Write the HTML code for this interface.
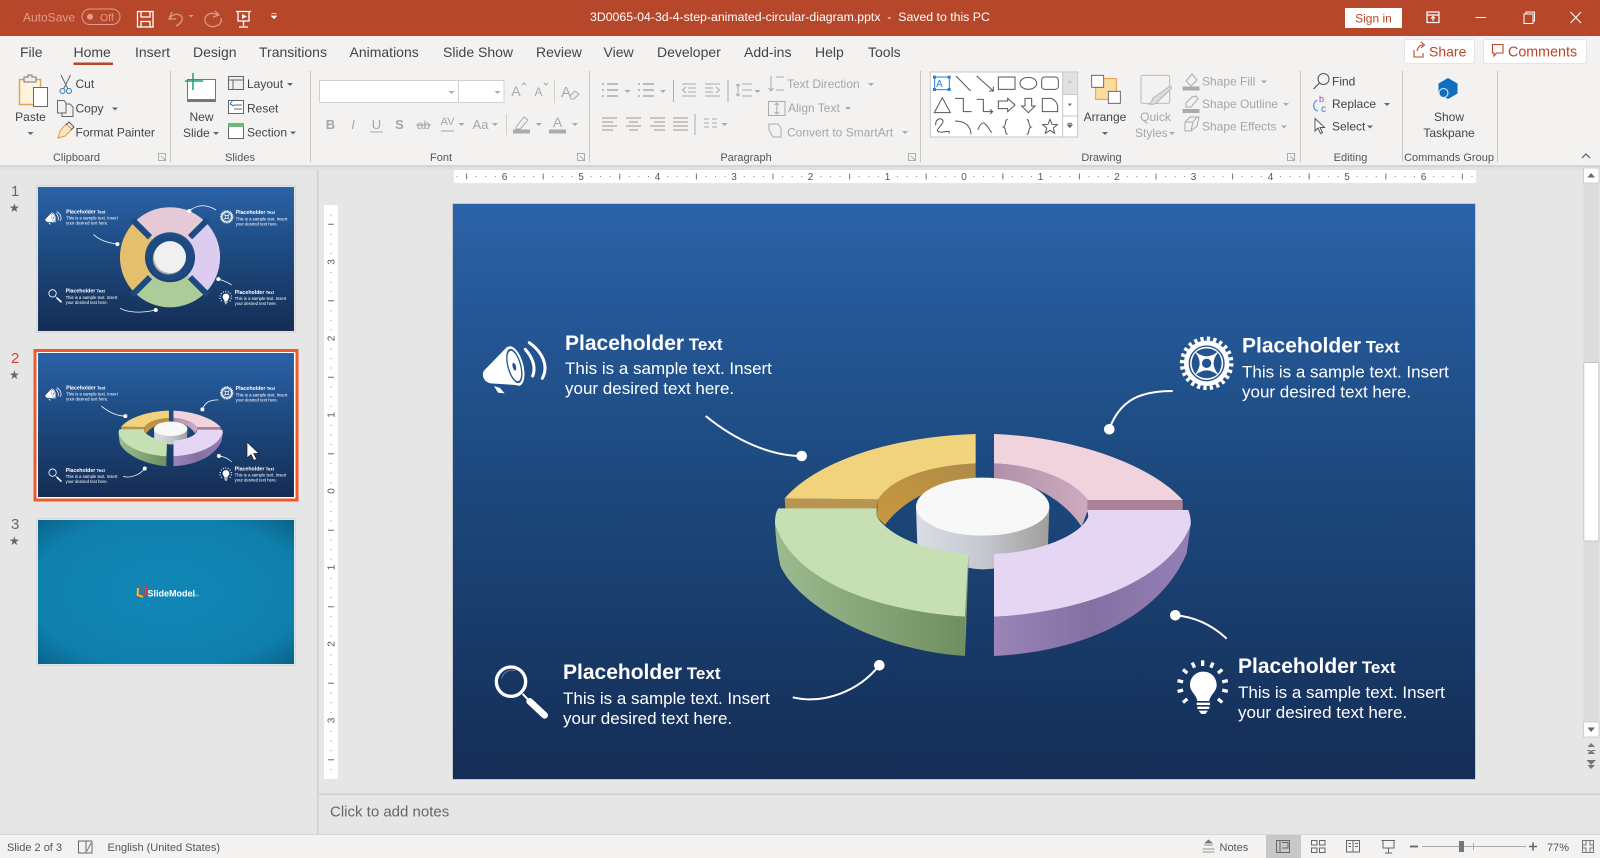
<!DOCTYPE html>
<html lang="en"><head><meta charset="utf-8"><title>3D0065-04-3d-4-step-animated-circular-diagram.pptx</title>
<style>
html,body{margin:0;padding:0;width:1600px;height:858px;overflow:hidden;background:#e6e6e6}
svg{display:block}
body>svg{filter:blur(.35px)}
text{font-family:"Liberation Sans",sans-serif}
.t{font-size:14px;fill:#444}
.r{font-size:12px;fill:#444}
.d{font-size:12px;fill:#a6a6a6}
.g{font-size:11px;fill:#555}
.m{text-anchor:middle}
.h{font-weight:bold;font-size:21px}
.h2{font-weight:bold;font-size:17px}
.st{font-size:17px;fill:#fff}
.ic{fill:none;stroke:#666;stroke-width:1}
.ig{fill:none;stroke:#aaa;stroke-width:1.2}
.car{fill:#666}
.card{fill:#aaa}
.rn{font-size:10px;fill:#555;text-anchor:middle}
.s{font-size:11px;fill:#555}
</style></head>
<body>
<svg width="1600" height="858" viewBox="0 0 1600 858" xmlns="http://www.w3.org/2000/svg">
<defs>
<linearGradient id="bg" x1="0" y1="0" x2="0" y2="1"><stop offset="0" stop-color="#2b62a8"/><stop offset=".45" stop-color="#1d4a80"/><stop offset="1" stop-color="#142d55"/></linearGradient>
<radialGradient id="teal" cx=".5" cy=".5" r=".75"><stop offset="0" stop-color="#1186b6"/><stop offset=".7" stop-color="#0f80ae"/><stop offset="1" stop-color="#0a5c80"/></radialGradient>
<linearGradient id="cyl" x1="0" y1="0" x2="1" y2="0"><stop offset="0" stop-color="#dadde6"/><stop offset=".5" stop-color="#c5c8d0"/><stop offset="1" stop-color="#a09e9a"/></linearGradient>
<linearGradient id="yw" x1="0" y1="1" x2="1" y2="0"><stop offset="0" stop-color="#cc973d"/><stop offset="1" stop-color="#ad8c48"/></linearGradient>
<linearGradient id="pw" x1="0" y1="0" x2="1" y2="0"><stop offset="0" stop-color="#b08fa8"/><stop offset="1" stop-color="#ceabc0"/></linearGradient>
<linearGradient id="gs" x1="0" y1="0" x2="1" y2="0"><stop offset="0" stop-color="#9cbb90"/><stop offset="1" stop-color="#6f8f60"/></linearGradient>
<linearGradient id="vs" x1="0" y1="0" x2="1" y2="0"><stop offset="0" stop-color="#9a84b8"/><stop offset=".5" stop-color="#8570a2"/><stop offset="1" stop-color="#9580b6"/></linearGradient>
<g id="donut">
<path d="M385 238C430 165 560 132 677 130L677 180C560 185 450 250 405 315L380 290Z" fill="url(#yw)"/>
<path d="M104 235L385 238L380 268L106 268Z" fill="#b8964f"/>
<path d="M104 235C200 125 420 50 677 42L677 130C560 135 430 165 385 238Z" fill="#f2d37d"/>
<path d="M732 130C860 135 970 180 1013 240L1013 272L995 320C950 250 850 180 732 176Z" fill="url(#pw)"/>
<path d="M1013 240L1298 240L1298 272L1013 272Z" fill="#a98295"/>
<path d="M732 42C960 50 1200 130 1298 240L1013 240C970 180 860 135 732 130Z" fill="#f0d3dc"/>
<path d="M498 260L502 375C560 400 620 448 698 448C780 448 850 400 894 375L898 260Z" fill="url(#cyl)"/>
<ellipse cx="698" cy="260" rx="200" ry="87" fill="#f8f8f8"/>
<path d="M75 310C78 370 85 410 92 440C150 560 380 690 645 708L645 590C400 575 150 490 75 310Z" fill="url(#gs)"/>
<path d="M655 402L645 590L645 708L655 448Z" fill="#7f9a68"/>
<path d="M85 265L380 265L380 290C420 350 530 395 655 402L645 590C400 575 130 490 75 310C75 290 78 275 85 265Z" fill="#c6e0b4"/>
<path d="M1322 315L1310 400C1230 590 1000 695 732 708L732 590C1000 578 1260 480 1322 315Z" fill="url(#vs)"/>
<path d="M1012 270L1315 270C1322 290 1323 305 1322 315C1260 480 1000 578 732 590L732 402C860 398 990 350 1015 290Z" fill="#e5d6f4"/>
</g>
<g id="ic1" transform="translate(470,320) scale(.3333)">
<path d="M42 152L112 80L152 196L62 190C40 185 34 165 42 152Z" fill="#fff"/>
<ellipse cx="133" cy="138" rx="27" ry="61" transform="rotate(-15 133 138)" fill="#fff"/>
<ellipse cx="133" cy="138" rx="21" ry="53" transform="rotate(-15 133 138)" fill="#24548f"/>
<ellipse cx="133" cy="138" rx="17" ry="47" transform="rotate(-15 133 138)" fill="#fff"/>
<ellipse cx="133" cy="140" rx="5" ry="12" transform="rotate(-15 133 140)" fill="#24548f"/>
<path d="M166 88C190 115 198 145 188 168M178 68C220 98 236 140 217 175" fill="none" stroke="#fff" stroke-width="9" stroke-linecap="round"/>
<path d="M72 198L90 204L104 220L84 218Z" fill="#fff"/>
</g>
<g id="ic2" transform="translate(1100,320) scale(.3333)">
<circle cx="320" cy="130" r="72" fill="none" stroke="#fff" stroke-width="17" stroke-dasharray="9.4 9.45"/>
<circle cx="320" cy="130" r="61" fill="none" stroke="#fff" stroke-width="14"/>
<circle cx="320" cy="130" r="50" fill="#fff"/>
<circle cx="320" cy="130" r="51.500" fill="none" stroke="#24548f" stroke-width="2.500"/>
<g fill="#24548f"><path d="M288 96Q320 74 352 96Q320 122 288 96Z"/><path d="M288 96Q320 74 352 96Q320 122 288 96Z" transform="rotate(90 320 130)"/><path d="M288 96Q320 74 352 96Q320 122 288 96Z" transform="rotate(180 320 130)"/><path d="M288 96Q320 74 352 96Q320 122 288 96Z" transform="rotate(270 320 130)"/><circle cx="320" cy="130" r="14"/></g>
</g>
<g id="ic3" transform="translate(480,640) scale(.3333)">
<circle cx="93" cy="125" r="44" fill="none" stroke="#fff" stroke-width="10"/>
<path d="M128 162L145 180" stroke="#fff" stroke-width="6"/>
<path d="M149 184L194 226" stroke="#fff" stroke-width="20" stroke-linecap="round"/>
<path d="M65 115A32 32 0 0 1 105 92" fill="none" stroke="#fff" stroke-opacity=".5" stroke-width="2"/>
</g>
<g id="ic4" transform="translate(1160,600) scale(.3333)">
<path d="M130 215C155 215 170 235 170 255C170 275 150 285 148 303L112 303C110 285 90 275 90 255C90 235 105 215 130 215Z" fill="#fff"/>
<path d="M110 308H150V315H110ZM112 320H148V327H112ZM116 332H144L136 342H124Z" fill="#fff"/>
<g fill="#fff"><rect x="123" y="181" width="10" height="17"/><rect x="123" y="181" width="10" height="17" transform="rotate(24 128 258)"/><rect x="123" y="181" width="10" height="17" transform="rotate(-24 128 258)"/><rect x="123" y="181" width="10" height="17" transform="rotate(50 128 258)"/><rect x="123" y="181" width="10" height="17" transform="rotate(-50 128 258)"/><rect x="123" y="181" width="10" height="17" transform="rotate(78 128 258)"/><rect x="123" y="181" width="10" height="17" transform="rotate(-78 128 258)"/><rect x="123" y="181" width="10" height="17" transform="rotate(102 128 258)"/><rect x="123" y="181" width="10" height="17" transform="rotate(-102 128 258)"/><rect x="123" y="181" width="10" height="17" transform="rotate(130 128 258)"/><rect x="123" y="181" width="10" height="17" transform="rotate(-130 128 258)"/></g>
</g>
<path id="caret" d="M-3 0H3L0 3Z"/>
</defs>

<rect width="1600" height="858" fill="#e6e6e6"/>
<!-- title bar -->
<rect width="1600" height="36" fill="#b7472a"/>
<text x="23" y="21.5" font-size="12" fill="#df9f8b">AutoSave</text>
<rect x="82" y="9" width="38" height="15.5" rx="7.7" fill="none" stroke="#df9f8b"/>
<circle cx="90" cy="16.7" r="3" fill="#df9f8b"/><text x="100" y="21" font-size="10.5" fill="#df9f8b">Off</text>
<g fill="none" stroke="#fff" stroke-width="1.3"><rect x="137.5" y="11.5" width="15.5" height="15.5"/><path d="M141 11.5V17H150V11.5M141 27V21.5H150V27"/></g>
<g fill="none" stroke="#d89a84" stroke-width="1.3"><path d="M172 12L169 19L176 19M170 18C175 11 184 15 182 20C181 23 178 25 176 26"/><path d="M215 11L219 15L213 17M218 15C211 11 204 15 205 21C206 25 211 28 216 26C220 25 222 22 221 18"/></g>
<path class="car" transform="translate(191,15)" d="M-2.5 0H2.5L0 2.5Z" style="fill:#d89a84"/>
<g fill="none" stroke="#fff" stroke-width="1.3"><path d="M236 11.5H251M238 11.5V21H249V11.5M243.500 21V26M239 27H248"/></g><path d="M242 14L247 16.500L242 19Z" fill="#fff"/>
<path d="M271.500 13.500H276.500M271.500 16H276.500L274 18.500Z" stroke="#fff" fill="#fff" stroke-width=".8"/>
<text x="590" y="21" font-size="12.300" fill="#fff">3D0065-04-3d-4-step-animated-circular-diagram.pptx&#160; -&#160; Saved to this PC</text>
<rect x="1345" y="8" width="57" height="20" fill="#fff"/><text x="1373.500" y="22.500" font-size="12" fill="#b7472a" text-anchor="middle">Sign in</text>
<g fill="none" stroke="#fff" stroke-width="1.2"><rect x="1427" y="12" width="12" height="10.500"/><path d="M1427 15H1439M1433 21V17M1431 18.500L1433 16.500L1435 18.500"/></g>
<path d="M1475.500 17.500H1486" stroke="#fff" stroke-width="1"/>
<g fill="none" stroke="#fff" stroke-width="1"><rect x="1524" y="14" width="9" height="9.500"/><path d="M1526 14V12H1534.500V21H1533"/></g>
<path d="M1570.500 12L1581 23M1581 12L1570.500 23" stroke="#fff" stroke-width="1"/>

<!-- ribbon -->
<rect y="36" width="1600" height="129" fill="#f3f2f1"/>
<rect y="165" width="1600" height="2" fill="#d5d5d5"/>
<rect y="167" width="1600" height="3" fill="#e0e0e0"/>
<g class="t">
<text class="t" x="20" y="57">File</text><text class="t" x="73.500" y="57">Home</text><text class="t" x="135" y="57">Insert</text><text class="t" x="193" y="57">Design</text><text class="t" x="259" y="57">Transitions</text><text class="t" x="349.500" y="57">Animations</text><text class="t" x="443" y="57">Slide Show</text><text class="t" x="536" y="57">Review</text><text class="t" x="603.500" y="57">View</text><text class="t" x="657" y="57">Developer</text><text class="t" x="744" y="57">Add-ins</text><text class="t" x="815" y="57">Help</text><text class="t" x="868" y="57">Tools</text>
</g>
<rect x="73.500" y="62.500" width="39.500" height="2.500" fill="#b7472a"/>
<rect x="1404.500" y="39.500" width="70" height="24" rx="2" fill="#fff" stroke="#e6e4e2"/>
<path d="M1414 50V57H1423V53M1417 51C1418 47 1420 45 1423 45M1421 42L1424.500 45L1421 48" fill="none" stroke="#b7472a" stroke-width="1.100"/>
<text x="1429" y="56.500" font-size="14" fill="#b7472a">Share</text>
<rect x="1483.500" y="39.500" width="103" height="24" rx="2" fill="#fff" stroke="#e6e4e2"/>
<path d="M1492.500 44.500H1503V53H1496.500L1494 56V53H1492.500Z" fill="none" stroke="#b7472a" stroke-width="1.100"/>
<text x="1508" y="56.500" font-size="14.300" fill="#b7472a">Comments</text>

<!-- group separators -->
<g stroke="#c8c6c4"><path d="M170.500 71V162M310.500 71V162M589.500 71V162M920.500 71V162M1300.500 71V162M1402.500 71V162M1497.500 71V162"/></g>
<text class="g m" x="76.500" y="161">Clipboard</text><text class="g m" x="240" y="161">Slides</text><text class="g m" x="441" y="161">Font</text><text class="g m" x="746" y="161">Paragraph</text><text class="g m" x="1101.500" y="161">Drawing</text><text class="g m" x="1350.500" y="161">Editing</text><text class="g m" x="1449" y="161">Commands Group</text>
<g fill="none" stroke="#999" stroke-width=".8"><path d="M158.500 153.500V160.500H165.500V153.500ZM161 156L165 160"/><path d="M577.500 153.500V160.500H584.500V153.500ZM580 156L584 160"/><path d="M908.500 153.500V160.500H915.500V153.500ZM911 156L915 160"/><path d="M1287.500 153.500V160.500H1294.500V153.500ZM1290 156L1294 160"/></g>
<path d="M1582 158L1586 154L1590 158" fill="none" stroke="#555" stroke-width="1.200"/>

<!-- clipboard -->
<rect x="19.500" y="79.500" width="21" height="25" fill="#fdf3df" stroke="#e3a650" stroke-width="1.500"/>
<path d="M24 79.500V77H28V75H32V77H36V82H24Z" fill="#eee" stroke="#777"/>
<rect x="33.500" y="87.500" width="14" height="19" fill="#fff" stroke="#666"/>
<text class="r m" x="30.500" y="121">Paste</text><use href="#caret" x="30.500" y="132" class="car"/>
<path d="M61 75L68 89M70.500 75L63.500 89" stroke="#666" fill="none"/><circle cx="62.500" cy="91" r="2.500" fill="none" stroke="#2a7bbf"/><circle cx="69" cy="91" r="2.500" fill="none" stroke="#2a7bbf"/>
<text class="r" x="75.500" y="88">Cut</text>
<path class="ic" d="M57.500 100.500H64L66 103V113H57.500ZM66 104H70L73 107V116.500H62V113"/>
<text class="r" x="75.500" y="112.500">Copy</text><use href="#caret" x="115" y="107.500" class="car"/>
<path d="M66 124L72 129L65 136L58 138L60 131Z" fill="#f8e6c8" stroke="#e29a3a"/><path d="M66 125L69 122L74 127L71 130" fill="none" stroke="#555"/>
<text class="r" x="75.500" y="136.500">Format Painter</text>

<!-- slides -->
<rect x="187.500" y="79.500" width="28" height="22" fill="#fff" stroke="#777"/><rect x="187" y="99" width="29" height="3" fill="#777"/>
<path d="M193 73V90M185 81H203" stroke="#21a366" stroke-width="1.500"/>
<text class="r m" x="201.500" y="121">New</text><text class="r" x="183" y="137">Slide</text><use href="#caret" x="216" y="132" class="car"/>
<g class="ic"><rect x="228.500" y="76.500" width="15" height="13" fill="#eee"/><path d="M229 80H243M233 80V89"/></g><text class="r" x="247" y="88">Layout</text><use href="#caret" x="290" y="83" class="car"/>
<g class="ic"><rect x="228.500" y="100.500" width="15" height="13" fill="#fff"/><path d="M234 105H242M234 109H242"/></g><path d="M230 104L233 100M230 104L234 106" stroke="#2a7bbf" fill="none"/><text class="r" x="247" y="112.500">Reset</text>
<rect x="228.500" y="123.500" width="15" height="15" fill="#fff" stroke="#666"/><rect x="228" y="123" width="16" height="4" fill="#6fb77f"/><text class="r" x="247" y="136.500">Section</text><use href="#caret" x="293" y="131.500" class="car"/>

<!-- font -->
<rect x="319.500" y="80.500" width="139" height="22" fill="#fff" stroke="#d2d0ce"/><rect x="458.500" y="80.500" width="45.500" height="22" fill="#fff" stroke="#d2d0ce"/>
<use href="#caret" x="451.500" y="91" class="card"/><use href="#caret" x="497.500" y="91" class="card"/>
<text class="m" x="516" y="96" font-size="14" fill="#aaa">A</text><text class="m" x="538.500" y="96" font-size="12" fill="#aaa">A</text>
<path d="M522 85L524 83L526 85M544 83L546 85L548 83" fill="none" stroke="#aaa"/>
<path d="M554.500 80V103" stroke="#d2d0ce"/>
<text x="561" y="97" font-size="15" fill="#aaa">A</text><path d="M570 96L575 91L579 94L574 99H571Z" fill="#eee" stroke="#aaa"/>
<g fill="#a6a6a6"><text class="m" x="330.500" y="129" font-size="13" font-weight="bold" fill="#a6a6a6">B</text><text class="m" x="353" y="129" font-size="13" font-style="italic" fill="#a6a6a6">I</text><text class="m" x="376.500" y="129" font-size="13" fill="#a6a6a6">U</text><text class="m" x="399.500" y="129" font-size="13" font-weight="bold" fill="#a6a6a6">S</text><text class="m" x="423.500" y="129" font-size="12" fill="#a6a6a6">ab</text><text class="m" x="447.500" y="125" font-size="11" fill="#a6a6a6">AV</text><text class="m" x="480.500" y="129" font-size="13" fill="#a6a6a6">Aa</text></g>
<path d="M370 132H383M416 125H431M441 131H454" stroke="#a6a6a6"/>
<use href="#caret" x="461.500" y="123" class="card"/><use href="#caret" x="495" y="123" class="card"/><use href="#caret" x="538.800" y="123" class="card"/><use href="#caret" x="575" y="123" class="card"/>
<path d="M506.500 114V135" stroke="#d2d0ce"/>
<path d="M516 127L524 117L528 120L520 129H516Z" fill="none" stroke="#aaa"/><rect x="513" y="129.500" width="17" height="4" fill="#aaa"/>
<text class="m" x="557.500" y="127" font-size="14" fill="#aaa">A</text><rect x="549" y="129.500" width="17" height="4" fill="#aaa"/>

<!-- paragraph -->
<g stroke="#aaa" fill="none">
<path d="M607 84H618M607 90H618M607 96H618M602 84H604M602 90H604M602 96H604" stroke-width="1.500"/>
<path d="M643 84H654M643 90H654M643 96H654M638 84H640M638 90H640M638 96H640" stroke-width="1.500"/>
<path d="M682 84H696M688 88H696M688 92H696M682 96H696M686 87L682.500 90L686 93" />
<path d="M705 84H720M705 88H713M705 92H713M705 96H720M716 87L719.500 90L716 93"/>
<path d="M742 84H752M742 90H752M742 96H752M738 84V96M736 86L738 84L740 86M736 94L738 96L740 94"/>
<path d="M602 118H617M602 122H613M602 126H617M602 130H613" stroke-width="1.200"/>
<path d="M626 118H641M629 122H638M626 126H641M629 130H638" stroke-width="1.200"/>
<path d="M650 118H665M654 122H665M650 126H665M654 130H665" stroke-width="1.200"/>
<path d="M673 118H688M673 122H688M673 126H688M673 130H688" stroke-width="1.200"/>
<path d="M704 119H709M704 123H709M704 127H709M712 119H717M712 123H717M712 127H717"/>
<path d="M673.500 80V102M728 80V102M695 114V135"/>
<path d="M771 76V90M768.500 88L771 91L773.500 88M776 90H784M776 77H784"/>
<path d="M768.500 101.500H785V115.500H768.500ZM776.800 103V114M774.500 105L776.800 103L779 105M774.500 112L776.800 114L779 112"/>
<path d="M769 124H778L781 128V137H773L769 130Z"/>
</g>
<use href="#caret" x="627.500" y="90" class="card"/><use href="#caret" x="663" y="90" class="card"/><use href="#caret" x="757.600" y="90" class="card"/><use href="#caret" x="724.500" y="123" class="card"/>
<text class="d" x="787" y="88">Text Direction</text><use href="#caret" x="871" y="83" class="card"/>
<text class="d" x="788" y="112">Align Text</text><use href="#caret" x="848" y="107" class="card"/>
<text class="d" x="787" y="136.500" font-size="12.500">Convert to SmartArt</text><use href="#caret" x="905" y="131" class="card"/>

<!-- drawing gallery -->
<g transform="translate(925,66) scale(.33333)" fill="none" stroke="#555" stroke-width="3">
<rect x="16" y="18" width="442" height="195" fill="#fff" stroke="#c8c6c4"/>
<rect x="413" y="19" width="44" height="66" fill="#e1e1e1" stroke="none"/>
<path d="M413 85H458M413 150H458M413 18V213" stroke="#c8c6c4"/>
<path d="M427 50H441L434 44Z" fill="#bbb" stroke="none"/>
<path d="M428 113H441L434.500 120Z" fill="#666" stroke="none"/>
<path d="M428 172H441M428 177H441L434.500 184Z" fill="#666" stroke="#666"/>
<rect x="29" y="33" width="44" height="38" stroke="#2b7cd3"/>
<g fill="#2b7cd3" stroke="none"><rect x="24" y="29" width="9" height="9"/><rect x="68" y="29" width="9" height="9"/><rect x="24" y="66" width="9" height="9"/><rect x="68" y="66" width="9" height="9"/></g>
<path d="M93 30L137 75M155 30L205 75M205 62V75H192"/>
<rect x="220" y="33" width="50" height="37"/><ellipse cx="310" cy="52" rx="25" ry="18"/><rect x="350" y="33" width="50" height="37" rx="9"/>
<path d="M28 140L52 95L76 140ZM90 97H115V137H140M155 100H175V137H203M195 130L203 137L195 144M220 105H248V97L270 117L248 137V128H220ZM300 97H320V120H330L310 140L290 120H300ZM352 97H378C390 100 398 112 398 125V137H352Z"/>
<path d="M32 178C30 150 62 155 52 172C44 185 28 195 45 198C60 200 78 190 72 202M90 165C120 165 137 180 138 205M158 192C175 150 185 180 200 200M248 160C238 160 245 180 235 183C245 186 238 205 248 205M305 160C315 160 308 180 318 183C308 186 315 205 305 205"/>
<path d="M375 160L381 175L397 176L385 186L389 202L375 193L361 202L365 186L353 176L369 175Z"/>
<path d="M512 38H574V100H512Z" fill="#fbdc9f" stroke="#e49a3e" stroke-width="3"/>
<path d="M550 76H586V112H550Z" fill="#fff" stroke-width="2.500"/>
<path d="M500 28H536V64H500Z" fill="#fff" stroke-width="2.500"/>
<rect x="648" y="28" width="86" height="84" rx="5" stroke="#bbb"/>
<path d="M684 96L736 60L740 66L695 110C688 116 680 116 672 114C682 110 680 104 684 96Z" fill="#ddd" stroke="#b5b5b5"/>
</g>
<text class="m" x="939.500" y="87" font-size="10" fill="#2b7cd3">A</text>
<text class="r m" x="1105" y="121">Arrange</text><use href="#caret" x="1105" y="132" class="car"/>
<text class="d m" x="1155.500" y="121">Quick</text><text class="d" x="1135" y="137">Styles</text><use href="#caret" x="1172" y="132" class="card"/>
<g fill="none" stroke="#aaa"><path d="M1186 81L1192 74L1197 80L1191 86Z"/><rect x="1183" y="87" width="16" height="3" fill="#aaa"/><path d="M1186 103L1192 97L1196 96L1198 99L1191 107H1186Z"/><rect x="1183" y="109.500" width="16" height="3" fill="#aaa"/><path d="M1185 122L1190 117H1199L1197 126L1191 131H1185Z"/><path d="M1185 122H1193L1197 117M1193 122L1191 131"/></g>
<text class="d" x="1202" y="85.500">Shape Fill</text><use href="#caret" x="1264" y="80.500" class="card"/>
<text class="d" x="1202" y="108">Shape Outline</text><use href="#caret" x="1286" y="103" class="card"/>
<text class="d" x="1202" y="130.500">Shape Effects</text><use href="#caret" x="1284" y="125.500" class="card"/>

<!-- editing -->
<circle cx="1323.500" cy="79" r="5.500" fill="none" stroke="#555"/><path d="M1319.500 83L1313.500 89" stroke="#555" stroke-width="1.200"/>
<text class="r" x="1332" y="85.500">Find</text>
<text x="1319" y="102" font-size="9" fill="#a347d1">b</text><text x="1321" y="112" font-size="10" fill="#2b7cd3">c</text><path d="M1317 100C1312 104 1313 110 1318 111" fill="none" stroke="#2b7cd3"/>
<text class="r" x="1332" y="108">Replace</text><use href="#caret" x="1387" y="103" class="car"/>
<path d="M1315 118.500V131L1318 128L1320.500 133.500L1322.500 132.500L1320 127.500H1324.500Z" fill="#fff" stroke="#555"/>
<text class="r" x="1332" y="130.500">Select</text><use href="#caret" x="1370" y="125.500" class="car"/>
<path d="M1448 78L1457.500 83.500V93.500L1448 99L1438.500 93.500V83.500Z" fill="#106ebe"/><circle cx="1443.500" cy="93" r="4.500" fill="#106ebe" stroke="#f3f2f1"/>
<text class="r m" x="1449" y="121">Show</text><text class="r m" x="1449" y="137">Taskpane</text>

<!-- left panel / rulers -->
<rect x="317" y="170" width="1.500" height="665" fill="#d0d0d0"/>
<g>
<text x="11" y="196" font-size="15" fill="#666">1</text><text x="9" y="212" font-size="12" fill="#666">★</text>
<text x="11" y="363" font-size="15" fill="#d9432a">2</text><text x="9" y="379" font-size="12" fill="#666">★</text>
<text x="11" y="529" font-size="15" fill="#666">3</text><text x="9" y="545" font-size="12" fill="#666">★</text>
</g>
<!-- h ruler -->
<rect x="454" y="170" width="1022" height="13" fill="#fff"/>
<path d="M456.500 176.500H1476" stroke="#888" stroke-dasharray="1 8.575"/>
<path d="M466.100 176.500H1476" stroke="#777" stroke-width="6" stroke-dasharray="1 75.600"/>
<g>
<rect x="500" y="171" width="9" height="11" fill="#fff"/><rect x="576.500" y="171" width="9" height="11" fill="#fff"/><rect x="653" y="171" width="9" height="11" fill="#fff"/><rect x="729.500" y="171" width="9" height="11" fill="#fff"/><rect x="806" y="171" width="9" height="11" fill="#fff"/><rect x="883" y="171" width="9" height="11" fill="#fff"/><rect x="959.500" y="171" width="9" height="11" fill="#fff"/><rect x="1036" y="171" width="9" height="11" fill="#fff"/><rect x="1112.500" y="171" width="9" height="11" fill="#fff"/><rect x="1189" y="171" width="9" height="11" fill="#fff"/><rect x="1266" y="171" width="9" height="11" fill="#fff"/><rect x="1342.500" y="171" width="9" height="11" fill="#fff"/><rect x="1419" y="171" width="9" height="11" fill="#fff"/>
<text class="rn" x="504.500" y="180">6</text><text class="rn" x="581" y="180">5</text><text class="rn" x="657.500" y="180">4</text><text class="rn" x="734" y="180">3</text><text class="rn" x="810.500" y="180">2</text><text class="rn" x="887.500" y="180">1</text><text class="rn" x="964" y="180">0</text><text class="rn" x="1040.500" y="180">1</text><text class="rn" x="1117" y="180">2</text><text class="rn" x="1193.500" y="180">3</text><text class="rn" x="1270.500" y="180">4</text><text class="rn" x="1347" y="180">5</text><text class="rn" x="1423.500" y="180">6</text>
</g>
<!-- v ruler -->
<rect x="324" y="205" width="14" height="574" fill="#fff"/>
<path d="M331 214.600V778" stroke="#888" stroke-dasharray="1 8.560"/>
<path d="M331 223V778" stroke="#777" stroke-width="6" stroke-dasharray="1 75.500" transform="translate(0,.7)"/>
<g>
<rect x="325" y="257" width="12" height="10" fill="#fff"/><rect x="325" y="333.500" width="12" height="10" fill="#fff"/><rect x="325" y="410" width="12" height="10" fill="#fff"/><rect x="325" y="486" width="12" height="10" fill="#fff"/><rect x="325" y="562.500" width="12" height="10" fill="#fff"/><rect x="325" y="639" width="12" height="10" fill="#fff"/><rect x="325" y="715.500" width="12" height="10" fill="#fff"/>
<text class="rn" transform="translate(334.500,262) rotate(-90)">3</text><text class="rn" transform="translate(334.500,338.500) rotate(-90)">2</text><text class="rn" transform="translate(334.500,415) rotate(-90)">1</text><text class="rn" transform="translate(334.500,491) rotate(-90)">0</text><text class="rn" transform="translate(334.500,567.500) rotate(-90)">1</text><text class="rn" transform="translate(334.500,644) rotate(-90)">2</text><text class="rn" transform="translate(334.500,720.500) rotate(-90)">3</text>
</g>

<!-- scrollbar -->
<rect x="1583.500" y="168" width="15.500" height="569" fill="#dcdcdc"/>
<rect x="1583.500" y="168" width="15.500" height="15" fill="#fff" stroke="#d0d0d0"/><path d="M1587.500 177.500L1591 173L1595 177.500Z" fill="#666"/>
<rect x="1583.800" y="362.500" width="15" height="178.500" fill="#fff" stroke="#c6c6c6"/>
<rect x="1583.500" y="722" width="15.500" height="15" fill="#fff" stroke="#d0d0d0"/><path d="M1587.500 727.500H1595L1591 732Z" fill="#666"/>
<path d="M1587.500 747H1595L1591 743ZM1587 750H1595.500V751H1587ZM1587.500 754H1595L1591 750Z" fill="#777"/>
<path d="M1587.500 761H1595L1591 765ZM1587 760H1595.500V761H1587ZM1587.500 765H1595L1591 769Z" fill="#777"/>

<!-- main slide -->
<rect x="452.500" y="203.500" width="1023" height="576" fill="none" stroke="#c8c8c8"/>
<svg x="453" y="204" width="1022" height="575" viewBox="453 204 1022 575">
<rect x="453" y="204" width="1022" height="575" fill="url(#bg)"/>
<use href="#donut" transform="translate(750,420) scale(.33333)"/>
<g fill="none" stroke="#fff" stroke-width="2"><path d="M705.700 416C735 440 770 456 801.700 456"/><path d="M1172.700 391C1140 391 1120 400 1109.300 429"/><path d="M792.700 697.300C825 705 860 690 879.300 665.300"/><path d="M1175.300 615.300C1195 617 1212 625 1226.700 638.700"/></g>
<g fill="#fff"><circle cx="801.700" cy="456" r="5.300"/><circle cx="1109.300" cy="429.300" r="5.300"/><circle cx="879.300" cy="665.300" r="5.300"/><circle cx="1175.300" cy="615.300" r="5.300"/></g>
<use href="#ic1"/><use href="#ic2"/><use href="#ic3"/><use href="#ic4"/>
<text class="st" x="565" y="350"><tspan class="h">Placeholder</tspan> <tspan class="h2">Text</tspan><tspan x="565" dy="24">This is a sample text. Insert</tspan><tspan x="565" dy="20">your desired text here.</tspan></text>
<text class="st" x="1242" y="352.700"><tspan class="h">Placeholder</tspan> <tspan class="h2">Text</tspan><tspan x="1242" dy="25">This is a sample text. Insert</tspan><tspan x="1242" dy="20">your desired text here.</tspan></text>
<text class="st" x="563" y="679"><tspan class="h">Placeholder</tspan> <tspan class="h2">Text</tspan><tspan x="563" dy="25">This is a sample text. Insert</tspan><tspan x="563" dy="20">your desired text here.</tspan></text>
<text class="st" x="1238" y="673"><tspan class="h">Placeholder</tspan> <tspan class="h2">Text</tspan><tspan x="1238" dy="25">This is a sample text. Insert</tspan><tspan x="1238" dy="20">your desired text here.</tspan></text>
</svg>

<!-- thumb 1 -->
<rect x="37" y="186" width="258" height="146" fill="#fff" stroke="#c8c8c8"/>
<svg x="38" y="187" width="256" height="144" viewBox="453 204 1022 575">
<rect x="453" y="204" width="1022" height="575" fill="url(#bg)"/>
<path d="M838.600 343.200A200 200 0 0 1 1121.400 343.200L1050.700 413.900A100 100 0 0 0 909.300 413.900Z" fill="#e6c9d6"/>
<path d="M1121.400 343.200A200 200 0 0 1 1121.400 626L1050.700 555.300A100 100 0 0 0 1050.700 413.900Z" fill="#dccdf0"/>
<path d="M1121.400 626A200 200 0 0 1 838.600 626L909.300 555.300A100 100 0 0 0 1050.700 555.300Z" fill="#aecb9a"/>
<path d="M838.600 626A200 200 0 0 1 838.600 343.200L909.300 413.900A100 100 0 0 0 909.300 555.300Z" fill="#e3bf6e"/>
<path d="M900 404.600L830 334.600M1060 404.600L1130 334.600M1060 564.600L1130 634.600M900 564.600L830 634.600" stroke="#1d4a80" stroke-width="24"/>
<circle cx="980" cy="484.600" r="92" fill="#1d4a80"/>
<circle cx="975" cy="490" r="64" fill="#aaa"/><circle cx="980" cy="484" r="64" fill="#f0f0f0"/>
<g fill="none" stroke="#fff" stroke-width="3"><path d="M674 394C700 415 720 425 770 432"/><path d="M1057 300C1090 270 1130 275 1164 296"/><path d="M1173 572C1195 578 1210 585 1226 595"/><path d="M780 688C820 710 880 705 923 695"/></g>
<g fill="#fff"><circle cx="770" cy="432" r="8"/><circle cx="1057" cy="300" r="8"/><circle cx="1173" cy="572" r="8"/><circle cx="923" cy="695" r="8"/></g>
<g transform="translate(0,-40)"><use href="#ic1"/><text class="st" x="565" y="350"><tspan class="h">Placeholder</tspan> <tspan class="h2">Text</tspan><tspan x="565" dy="24">This is a sample text. Insert</tspan><tspan x="565" dy="20">your desired text here.</tspan></text></g>
<g transform="translate(0,-40)"><use href="#ic2"/><text class="st" x="1242" y="352.700"><tspan class="h">Placeholder</tspan> <tspan class="h2">Text</tspan><tspan x="1242" dy="25">This is a sample text. Insert</tspan><tspan x="1242" dy="20">your desired text here.</tspan></text></g>
<g transform="translate(0,-53)"><use href="#ic3"/><text class="st" x="563" y="679"><tspan class="h">Placeholder</tspan> <tspan class="h2">Text</tspan><tspan x="563" dy="25">This is a sample text. Insert</tspan><tspan x="563" dy="20">your desired text here.</tspan></text></g>
<g transform="translate(0,-42)"><use href="#ic4"/><text class="st" x="1238" y="673"><tspan class="h">Placeholder</tspan> <tspan class="h2">Text</tspan><tspan x="1238" dy="25">This is a sample text. Insert</tspan><tspan x="1238" dy="20">your desired text here.</tspan></text></g>
</svg>

<!-- thumb 2 -->
<rect x="35" y="350.500" width="262" height="149.500" fill="#fff" stroke="#ee5a2b" stroke-width="3"/>
<svg x="38" y="353" width="256" height="144" viewBox="453 204 1022 575">
<rect x="453" y="204" width="1022" height="575" fill="url(#bg)"/>
<use href="#donut" transform="translate(750,420) scale(.33333)"/>
<g fill="none" stroke="#fff" stroke-width="3"><path d="M705.700 416C735 440 770 456 801.700 456"/><path d="M1172.700 391C1140 391 1120 400 1109.300 429"/><path d="M792.700 697.300C825 705 860 690 879.300 665.300"/><path d="M1175.300 615.300C1195 617 1212 625 1226.700 638.700"/></g>
<g fill="#fff"><circle cx="801.700" cy="456" r="8"/><circle cx="1109.300" cy="429.300" r="8"/><circle cx="879.300" cy="665.300" r="8"/><circle cx="1175.300" cy="615.300" r="8"/></g>
<use href="#ic1"/><use href="#ic2"/><use href="#ic3"/><use href="#ic4"/>
<text class="st" x="565" y="350"><tspan class="h">Placeholder</tspan> <tspan class="h2">Text</tspan><tspan x="565" dy="24">This is a sample text. Insert</tspan><tspan x="565" dy="20">your desired text here.</tspan></text>
<text class="st" x="1242" y="352.700"><tspan class="h">Placeholder</tspan> <tspan class="h2">Text</tspan><tspan x="1242" dy="25">This is a sample text. Insert</tspan><tspan x="1242" dy="20">your desired text here.</tspan></text>
<text class="st" x="563" y="679"><tspan class="h">Placeholder</tspan> <tspan class="h2">Text</tspan><tspan x="563" dy="25">This is a sample text. Insert</tspan><tspan x="563" dy="20">your desired text here.</tspan></text>
<text class="st" x="1238" y="673"><tspan class="h">Placeholder</tspan> <tspan class="h2">Text</tspan><tspan x="1238" dy="25">This is a sample text. Insert</tspan><tspan x="1238" dy="20">your desired text here.</tspan></text>
</svg>
<path d="M247 442V458L251 454.500L254 460.500L256.500 459L253.700 453.500H259Z" fill="#fff" stroke="#222" stroke-width=".7"/>

<!-- thumb 3 -->
<rect x="37" y="519" width="258" height="146" fill="#fff" stroke="#c8c8c8"/>
<rect x="38" y="520" width="256" height="144" fill="url(#teal)"/>
<path d="M138 588L146 587L147 594L139 596Z" fill="none" stroke="#e8372b" stroke-width="1.500"/>
<path d="M138 588L137.500 595L143 597" fill="none" stroke="#f3c623" stroke-width="1.800"/>
<text x="147.500" y="596.500" font-size="9" font-weight="bold" fill="#fff">SlideModel</text><text x="190" y="596.500" font-size="4" fill="#dde">.com</text>

<!-- notes -->
<rect x="319" y="793.500" width="1281" height="1.500" fill="#cfcfcf"/>
<text x="330" y="816.500" font-size="15" fill="#666">Click to add notes</text>

<!-- status bar -->
<rect y="835" width="1600" height="23" fill="#f3f2f1"/><rect y="834" width="1600" height="1" fill="#d8d8d8"/>
<text class="s" x="7" y="851">Slide 2 of 3</text>
<path class="ic" d="M78.500 841H86V853H78.500ZM86 841H92M92 841V853H86" stroke="#777"/><path d="M87 851L91 843" stroke="#777"/>
<text class="s" x="107.500" y="851">English (United States)</text>
<path d="M1204 845H1213M1202.500 849H1214.500M1202.500 852H1214.500M1205 843L1208.500 840L1212 843Z" stroke="#777" fill="#777" stroke-width=".8"/>
<text class="s" x="1219.500" y="851">Notes</text>
<rect x="1266" y="835" width="35" height="23" fill="#c8c8c8"/>
<g fill="none" stroke="#666"><rect x="1276.500" y="840.500" width="13" height="12"/><path d="M1280 840.500V852.500M1282 842.500H1288V848H1282"/><rect x="1311.500" y="840.500" width="5.500" height="4.500"/><rect x="1319.500" y="840.500" width="5.500" height="4.500"/><rect x="1311.500" y="848" width="5.500" height="4.500"/><rect x="1319.500" y="848" width="5.500" height="4.500"/><path d="M1346.500 840.500H1359.500V852H1346.500ZM1353 840.500V852M1348.500 843.500H1351M1348.500 846.500H1351M1355 843.500H1358M1355 846.500H1358"/><path d="M1381.500 840.500H1395M1383 840.500V848H1394V840.500M1388.500 848V852.500M1385 853H1392"/></g>
<path d="M1410 846.500H1418" stroke="#666" stroke-width="1.800"/>
<path d="M1422 846.500H1526" stroke="#aaa"/><path d="M1473.500 843V850" stroke="#aaa"/>
<rect x="1459" y="841" width="5" height="11" fill="#777"/>
<path d="M1529 846.500H1537M1533 842.500V850.500" stroke="#666" stroke-width="1.600"/>
<text class="s" x="1547" y="851">77%</text>
<g fill="none" stroke="#777"><rect x="1582.500" y="840.500" width="11" height="12"/><path d="M1582.500 845H1586V840.500M1590 840.500V845H1593.500M1593.500 848H1590V852.500M1586 852.500V848H1582.500"/></g>
</svg>
</body></html>
